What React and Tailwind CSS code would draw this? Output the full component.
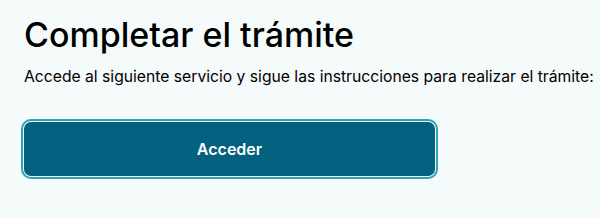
export default function App() {
  return (
    <div className="min-h-[217px] w-[600px] bg-[#f5fafb] px-6 pt-[15px]" style={{ fontFamily: "Inter, 'Noto Sans', sans-serif" }}>
      <h1 className="text-[34px] leading-[40px] font-medium text-black">Completar el trámite</h1>
      <p className="mt-[10px] whitespace-nowrap text-[15.7px] leading-[24px] text-black">Accede al siguiente servicio y sigue las instrucciones para realizar el trámite:</p>
      <button className="mt-[33px] flex h-[54px] w-[411px] items-center justify-center rounded-[7px] bg-[#04607f] text-[16px] font-semibold text-white outline outline-2 outline-offset-1 outline-[#2aa3b5]">
        Acceder
      </button>
    </div>
  );
}
